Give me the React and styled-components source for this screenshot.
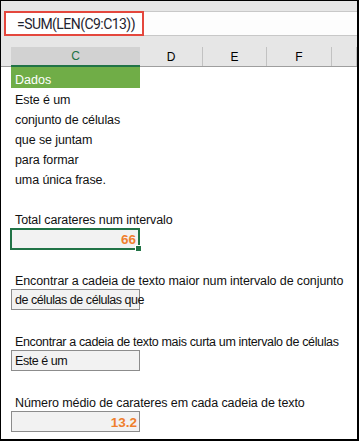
import styled, { createGlobalStyle } from 'styled-components';

const GlobalStyle = createGlobalStyle`
  body {
    margin: 0;
    background: #fff;
  }
`;

const Frame = styled.div`
  width: 359px;
  height: 441px;
  box-sizing: border-box;
  border-style: solid;
  border-color: #000;
  border-width: 1px 2px 2px 1px;
  background: #fff;
  overflow: hidden;
  font-family: "Liberation Sans", Arial, sans-serif;
  color: #111;
`;

const TopArea = styled.div`
  background: #e6e6e6;
  padding: 10px 0 11px 3px;
`;

const FormulaBar = styled.div`
  display: flex;
  height: 25px;
`;

const FormulaBox = styled.div`
  width: 140px;
  box-sizing: border-box;
  border: 2px solid #e4473d;
  background: #fff;
  padding-left: 11px;
  display: flex;
  align-items: center;
  font-family: Roboto, "Liberation Sans", sans-serif;
  font-size: 14px;
  letter-spacing: -0.55px;
  color: #1f2430;
`;

const FormulaRest = styled.div`
  flex: 1;
  background: #fdfdfd;
  border-top: 1px solid #c8c8c8;
  border-bottom: 1px solid #c8c8c8;
`;

const HeaderRow = styled.div`
  display: flex;
  height: 19px;
  background: #e6e6e6;
  border-bottom: 1px solid #9e9e9e;
`;

const HeaderSpacer = styled.div`
  width: 10px;
`;

const HeaderCell = styled.div`
  width: ${p => p.$w}px;
  flex: ${p => (p.$w ? 'none' : 1)};
  box-sizing: border-box;
  display: flex;
  align-items: center;
  justify-content: center;
  font-size: 12px;
  color: ${p => (p.$selected ? '#217346' : '#000')};
  background: ${p => (p.$selected ? '#d2d2d2' : 'transparent')};
  border-right: ${p => (p.$selected ? 'none' : '1px solid #c2c2c2')};
  border-bottom: ${p => (p.$selected ? '2px solid #217346' : 'none')};
  margin-bottom: ${p => (p.$selected ? '-1px' : '0')};
  height: ${p => (p.$selected ? '20px' : '19px')};
`;

const Sheet = styled.div`
  padding-left: 10px;
`;

const Row = styled.div`
  height: ${p => p.$h || 20}px;
  width: 129px;
  display: flex;
  align-items: flex-end;
  line-height: 15px;
  font-size: 12.5px;
  letter-spacing: ${p => p.$ls || '-0.1px'};
  white-space: nowrap;
  padding-left: 4px;
  box-sizing: border-box;
  background: ${p => p.$bg || 'transparent'};
  color: ${p => (p.$bg ? '#fff' : '#111')};
`;

const Section = styled.div`
  margin-bottom: 20px;
`;

const ValueBox = styled.div`
  position: relative;
  box-sizing: border-box;
  width: ${p => (p.$selected ? 130 : 129)}px;
  height: ${p => (p.$selected ? 22 : 21)}px;
  margin-left: ${p => (p.$selected ? '-1px' : '0')};
  margin-bottom: ${p => (p.$selected ? '-1px' : '0')};
  border: ${p => (p.$selected ? '2px solid #217346' : '1px solid #8c8c8c')};
  background: #f2f2f2;
  display: flex;
  align-items: flex-end;
  justify-content: ${p => (p.$number ? 'flex-end' : 'flex-start')};
  padding: ${p => (p.$number ? '0 2px 1px 0' : '0 0 1px 3px')};
  line-height: 15px;
  font-size: ${p => (p.$number ? '13.5px' : '12.5px')};
  font-weight: ${p => (p.$number ? 700 : 400)};
  letter-spacing: ${p => (p.$number ? '0' : '-0.45px')};
  color: ${p => (p.$number ? '#ef7f2d' : '#111')};
  white-space: nowrap;
`;

const Handle = styled.span`
  position: absolute;
  right: -4px;
  bottom: -4px;
  width: 7px;
  height: 7px;
  box-sizing: border-box;
  background: #217346;
  border: 1px solid #fff;
`;

const dados = [
  'Este é um',
  'conjunto de células',
  'que se juntam',
  'para formar',
  'uma única frase.',
];

const results = [
  { label: 'Total carateres num intervalo', value: '66', number: true, selected: true },
  { label: 'Encontrar a cadeia de texto maior num intervalo de conjunto', value: 'de células de células que' },
  { label: 'Encontrar a cadeia de texto mais curta um intervalo de células', value: 'Este é um' },
  { label: 'Número médio de carateres em cada cadeia de texto', value: '13.2', number: true },
];

const App = () => {
  return (
    <>
      <GlobalStyle />
      <Frame>
        <TopArea>
          <FormulaBar>
            <FormulaBox>=SUM(LEN(C9:C13))</FormulaBox>
            <FormulaRest />
          </FormulaBar>
        </TopArea>
        <HeaderRow>
          <HeaderSpacer />
          <HeaderCell $w={129} $selected>C</HeaderCell>
          <HeaderCell $w={63}>D</HeaderCell>
          <HeaderCell $w={64}>E</HeaderCell>
          <HeaderCell $w={65}>F</HeaderCell>
          <HeaderCell />
        </HeaderRow>
        <Sheet>
          <Row $h={21} $bg="#70ad47" $ls="0">Dados</Row>
          {dados.map((text, i) => (
            <Row key={i}>{text}</Row>
          ))}
          <Row />
          {results.map((r, i) => (
            <Section key={i}>
              <Row $ls={i === 2 ? '-0.35px' : undefined}>{r.label}</Row>
              <ValueBox $number={r.number} $selected={r.selected}>
                {r.value}
                {r.selected && <Handle />}
              </ValueBox>
            </Section>
          ))}
        </Sheet>
      </Frame>
    </>
  );
};

export default App;
